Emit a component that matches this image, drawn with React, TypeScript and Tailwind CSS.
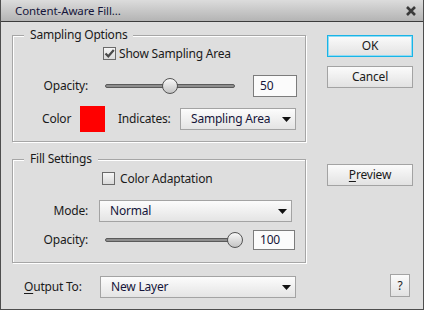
import type { ReactNode } from 'react';

function Caret() {
  return (
    <svg width="9" height="5" viewBox="0 0 9 5" className="shrink-0">
      <path d="M0 0h9L4.5 5z" fill="#111" />
    </svg>
  );
}

function Select({ value, className }: { value: string; className: string }) {
  return (
    <div
      className={`flex items-center justify-between border border-[#a3a3a3] bg-linear-to-b from-[#fcfcfc] to-[#e4e4e4] pl-[10px] pr-[4px] text-[#15153a] ${className}`}
    >
      <span>{value}</span>
      <Caret />
    </div>
  );
}

function Checkbox({ checked }: { checked: boolean }) {
  return (
    <div className="flex h-[13px] w-[13px] shrink-0 items-center justify-center border border-[#6a6a6a] bg-linear-to-b from-[#f6f6f6] to-[#dadada]">
      {checked && (
        <svg width="11" height="11" viewBox="0 0 11 11">
          <path d="M1.5 5.5 L4.3 8.3 L9.8 2" stroke="#4a4a4a" strokeWidth="2.2" fill="none" />
        </svg>
      )}
    </div>
  );
}

// value 0..100, thumb center sits on the track position
function Slider({ value }: { value: number }) {
  return (
    <div className="relative h-[16px] w-[130px] shrink-0">
      <div className="absolute left-0 right-0 top-[6px] h-[4px] rounded-full border border-[#5a5a5a] bg-[#8e8e8e]" />
      <div
        className="absolute top-0 -ml-[8px] h-[16px] w-[16px] rounded-full border border-[#545454] bg-linear-to-b from-[#f8f8f8] to-[#c4c4c4]"
        style={{ left: `${value}%` }}
      />
    </div>
  );
}

function NumberBox({ value, className }: { value: string; className: string }) {
  return (
    <div className={`flex items-center border border-[#7c7c7c] bg-[#fbfbfb] pl-[6px] text-[#15153a] ${className}`}>
      {value}
    </div>
  );
}

function Button({ children, className = '' }: { children: ReactNode; className?: string }) {
  return (
    <div
      className={`flex h-[22px] w-[86px] items-center justify-center border bg-linear-to-b from-[#fbfbfb] to-[#e2e2e2] ${className}`}
    >
      {children}
    </div>
  );
}

function Group({ title, children }: { title: string; children: ReactNode }) {
  return (
    <fieldset className="w-[294px] border border-[#a6a6a6] shadow-[inset_1px_1px_0_#fff,1px_1px_0_#fff]">
      <legend className="ml-[11px] bg-[#dedede] px-[6px] leading-[16px]">{title}</legend>
      {children}
    </fieldset>
  );
}

export default function App() {
  return (
    <div className="flex h-[310px] w-[424px] flex-col border-x border-b border-[#4e4e4e] bg-[#dedede] font-['Noto_Sans',sans-serif] text-[12px] leading-[16px] tracking-[-0.2px] text-[#1a1a1a]">
      {/* Заголовок окна */}
      <div className="flex h-[22px] shrink-0 items-center justify-between border-b border-[#3c3c3c] bg-linear-to-b from-[#dcdcdc] to-[#b4b4b4] pl-[14px] pr-[7px]">
        <span className="text-[11.5px] tracking-[-0.1px] text-[#15153a]">Content-Aware Fill...</span>
        <svg width="10" height="10" viewBox="0 0 10 10">
          <path d="M1 1L9 9M9 1L1 9" stroke="#3a3a3a" strokeWidth="2.6" />
        </svg>
      </div>

      <div className="flex pl-[11px] pr-[10px] pt-[5px]">
        {/* Левая колонка */}
        <div className="flex flex-col">
          <Group title="Sampling Options">
            <div className="mt-[2px] flex h-[17px] items-center pl-[90px]">
              <Checkbox checked />
              <span className="ml-[3px]">Show Sampling Area</span>
            </div>
            <div className="mt-[13px] flex h-[22px] items-center">
              <span className="w-[75px] text-right">Opacity:</span>
              <div className="ml-[17px]">
                <Slider value={50} />
              </div>
              <NumberBox value="50" className="ml-[18px] h-[22px] w-[44px]" />
            </div>
            <div className="mb-[9px] mt-[9px] flex h-[26px] items-center pl-[29px]">
              <span className="w-[38px]">Color</span>
              <div className="h-[26px] w-[25px] bg-[#ff0000]" />
              <span className="ml-[13px] w-[62px]">Indicates:</span>
              <Select value="Sampling Area" className="h-[22px] w-[116px]" />
            </div>
          </Group>

          <div className="mt-[9px]">
            <Group title="Fill Settings">
              <div className="mt-[3px] flex h-[17px] items-center pl-[89px]">
                <Checkbox checked={false} />
                <span className="ml-[5px]">Color Adaptation</span>
              </div>
              <div className="mt-[13px] flex h-[22px] items-center">
                <span className="w-[75px] text-right">Mode:</span>
                <Select value="Normal" className="ml-[11px] h-[22px] w-[193px]" />
              </div>
              <div className="mb-[12px] mt-[8px] flex h-[20px] items-center">
                <span className="w-[75px] text-right">Opacity:</span>
                <div className="ml-[17px]">
                  <Slider value={100} />
                </div>
                <NumberBox value="100" className="ml-[18px] h-[20px] w-[42px]" />
              </div>
            </Group>
          </div>
        </div>

        {/* Кнопки справа */}
        <div className="ml-[21px] flex flex-col">
          <Button className="mt-[8px] border-[#19b4e6] shadow-[inset_0_0_0_1px_#8fdcf5]">OK</Button>
          <Button className="mt-[9px] border-[#a3a3a3]">Cancel</Button>
          <Button className="mt-[76px] border-[#a3a3a3]">
            <span>
              <span className="underline underline-offset-2">P</span>review
            </span>
          </Button>
        </div>
      </div>

      {/* Вывод */}
      <div className="mt-[11px] flex items-start pl-[11px] pr-[10px]">
        <div className="mt-[2px] flex h-[22px] items-center">
          <span className="ml-[12px] w-[76px]">
            <span className="underline underline-offset-2">O</span>utput To:
          </span>
          <Select value="New Layer" className="h-[22px] w-[196px]" />
        </div>
        <div className="ml-auto mr-[3px] flex h-[23px] w-[20px] items-center justify-center border border-[#a3a3a3] bg-linear-to-b from-[#fbfbfb] to-[#e2e2e2]">
          ?
        </div>
      </div>
    </div>
  );
}
